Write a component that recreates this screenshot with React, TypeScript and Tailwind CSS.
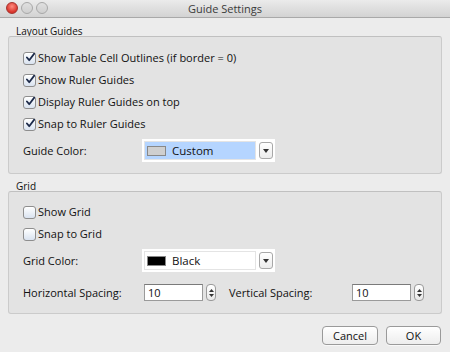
import { useState } from 'react';

const font = { fontFamily: '"Open Sans", "DejaVu Sans", sans-serif' };

function Check({ label, checked, onChange }: { label: string; checked: boolean; onChange: () => void }) {
  return (
    <button type="button" onClick={onChange} className="flex h-[22px] items-center gap-[2px] text-left">
      <span className="flex h-[13px] w-[13px] items-center justify-center rounded-[3px] border border-[#8e8e8e] bg-gradient-to-b from-[#ffffff] to-[#d9e3f0] shadow-[inset_0_1px_0_#fff]">
        {checked && (
          <svg width="13" height="13" viewBox="0 0 13 13" className="-mt-[2px] ml-[1px]">
            <path d="M2.5 6.5 L5.5 10 L12 1.5" fill="none" stroke="#1c2a4a" strokeWidth="2.3" strokeLinecap="round" strokeLinejoin="round" />
          </svg>
        )}
      </span>
      <span className="text-[11px] leading-[14px] text-[#111]">{label}</span>
    </button>
  );
}

function ColorSelect({ swatch, label, selected }: { swatch: string; label: string; selected?: boolean }) {
  return (
    <div className="flex h-[23px] w-[133px] items-center gap-[3px] bg-white p-[2px]">
      <div className={`flex h-[19px] flex-1 items-center gap-[6px] border border-[#e4e4e4] pl-[2px] ${selected ? 'bg-[#b5d5ff]' : 'bg-white'}`}>
        <span className="h-[10px] w-[19px] border border-[#888]" style={{ background: swatch }} />
        <span className="text-[11.5px] leading-[14px] text-[#111]">{label}</span>
      </div>
      <div className="flex h-[17px] w-[14px] items-center justify-center rounded-[3px] border border-[#a8a8a8] bg-gradient-to-b from-[#ffffff] to-[#ececec]">
        <svg width="6" height="4" viewBox="0 0 6 4"><path d="M0 0 H6 L3 4 Z" fill="#333" /></svg>
      </div>
    </div>
  );
}

function Spinner({ value }: { value: string }) {
  return (
    <div className="flex items-center gap-[3px]">
      <div className="flex h-[17px] w-[59px] items-center border border-[#9a9a9a] border-t-[#7a7a7a] bg-white pl-[3px] text-[11px] leading-[14px] text-[#111]">{value}</div>
      <div className="flex h-[17px] w-[10px] flex-col items-center justify-center gap-[2px] rounded-[4px] border border-[#9a9a9a] bg-gradient-to-b from-[#ffffff] to-[#e8e8e8]">
        <svg width="5" height="3" viewBox="0 0 5 3"><path d="M0 3 H5 L2.5 0 Z" fill="#333" /></svg>
        <svg width="5" height="3" viewBox="0 0 5 3"><path d="M0 0 H5 L2.5 3 Z" fill="#333" /></svg>
      </div>
    </div>
  );
}

export default function App() {
  const [checks, setChecks] = useState({ cell: true, ruler: true, top: true, snapRuler: true, grid: false, snapGrid: false });
  const toggle = (k: keyof typeof checks) => setChecks((c) => ({ ...c, [k]: !c[k] }));

  return (
    <div className="flex h-[352px] w-[450px] flex-col bg-[#ececec]" style={font}>
      <div className="relative flex h-[18px] items-center justify-center border-b border-[#a9a9a9] bg-gradient-to-b from-[#ebebeb] to-[#d3d3d3]">
        <div className="absolute left-[6px] top-[2px] flex gap-[3px]">
          <span className="h-[12px] w-[12px] rounded-full border border-[#a4332e] bg-[radial-gradient(circle_at_50%_35%,#ff8c80,#d8332a_70%)]" />
          <span className="h-[12px] w-[12px] rounded-full border border-[#a8a8a8] bg-gradient-to-b from-[#e0e0e0] to-[#cfcfcf]" />
          <span className="h-[12px] w-[12px] rounded-full border border-[#a8a8a8] bg-gradient-to-b from-[#e0e0e0] to-[#cfcfcf]" />
        </div>
        <span className="text-[11px] leading-[16px] text-[#3a3a3a]">Guide Settings</span>
      </div>

      <div className="flex flex-col px-[8px]">
        <div className="h-[18px] pl-[8px] pt-[7px] text-[10px] leading-[12px] text-[#111]">Layout Guides</div>
        <div className="flex h-[138px] flex-col rounded-[3px] border border-[#cbcbcb] border-t-[#c0c0c0] bg-[#e3e3e3] pl-[14px] pt-[10px]">
          <Check label="Show Table Cell Outlines (if border = 0)" checked={checks.cell} onChange={() => toggle('cell')} />
          <Check label="Show Ruler Guides" checked={checks.ruler} onChange={() => toggle('ruler')} />
          <Check label="Display Ruler Guides on top" checked={checks.top} onChange={() => toggle('top')} />
          <Check label="Snap to Ruler Guides" checked={checks.snapRuler} onChange={() => toggle('snapRuler')} />
          <div className="mt-[4px] flex items-center">
            <span className="w-[119px] text-[11px] leading-[14px] text-[#111]">Guide Color:</span>
            <ColorSelect swatch="#cfcfcf" label="Custom" selected />
          </div>
        </div>

        <div className="h-[17px] pl-[8px] pt-[6px] text-[10px] leading-[12px] text-[#111]">Grid</div>
        <div className="flex h-[123px] flex-col rounded-[3px] border border-[#cbcbcb] border-t-[#c0c0c0] bg-[#e3e3e3] pl-[14px] pt-[9px]">
          <Check label="Show Grid" checked={checks.grid} onChange={() => toggle('grid')} />
          <Check label="Snap to Grid" checked={checks.snapGrid} onChange={() => toggle('snapGrid')} />
          <div className="mt-[4px] flex items-center">
            <span className="w-[119px] text-[11px] leading-[14px] text-[#111]">Grid Color:</span>
            <ColorSelect swatch="#000000" label="Black" />
          </div>
          <div className="mt-[12px] flex items-center">
            <span className="w-[121px] text-[11px] leading-[14px] text-[#111]">Horizontal Spacing:</span>
            <Spinner value="10" />
            <span className="ml-[13px] w-[123px] text-[11px] leading-[14px] text-[#111]">Vertical Spacing:</span>
            <Spinner value="10" />
          </div>
        </div>
      </div>

      <div className="mt-[12px] flex justify-end gap-[8px] pr-[9px]">
        <button className="h-[19px] w-[56px] rounded-[4px] border border-[#9a9a9a] bg-gradient-to-b from-[#ffffff] to-[#ededed] text-[11px] leading-[14px] text-[#111] shadow-[0_1px_0_#f8f8f8]">Cancel</button>
        <button className="h-[19px] w-[55px] rounded-[4px] border border-[#9a9a9a] bg-gradient-to-b from-[#ffffff] to-[#ededed] text-[11px] leading-[14px] text-[#111] shadow-[0_1px_0_#f8f8f8]">OK</button>
      </div>
    </div>
  );
}
